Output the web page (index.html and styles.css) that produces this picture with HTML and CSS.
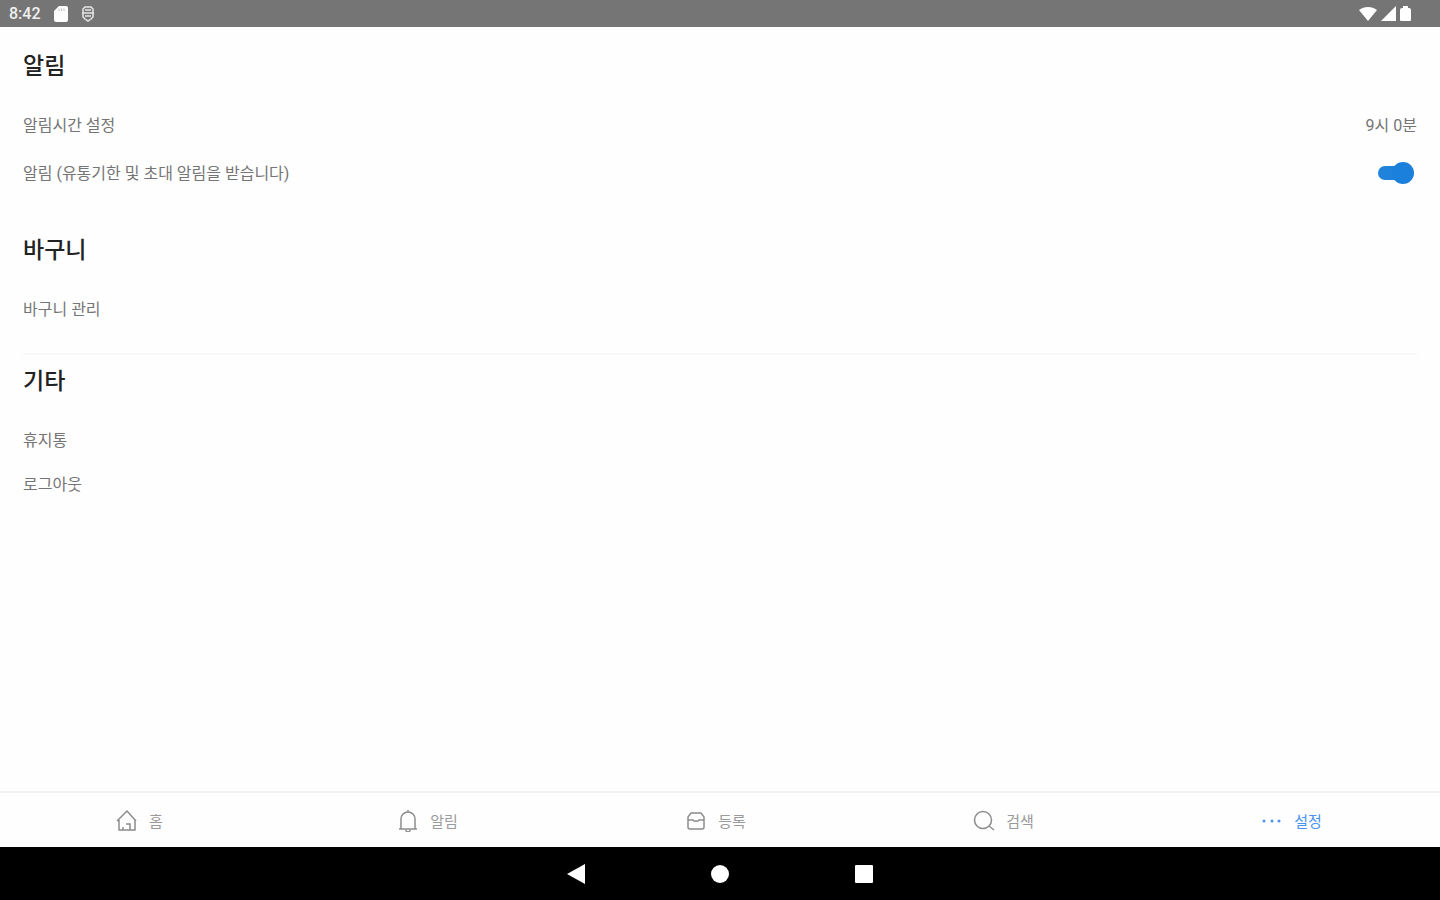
FILE: index.html
```html
<!DOCTYPE html>
<html lang="ko">

<head>
    <meta charset="UTF-8" />
    <meta name="viewport" content="width=device-width, initial-scale=1.0" />
    <title>설정</title>
    <link rel="stylesheet" href="styles.css">
</head>

<body>
    <header class="status-bar">
        <div class="status-left">
            <span class="clock">8:42</span>
            <svg width="14" height="18" viewBox="0 0 14 18" fill="#fff">
                <path d="M5 1h7a2 2 0 0 1 2 2v12a2 2 0 0 1-2 2H2a2 2 0 0 1-2-2V6z" />
                <path d="M5 3.5v2.500M7.500 3.500v2.500M10 3.500v2.500" stroke="#bbb" />
            </svg>
            <svg width="14" height="18" viewBox="0 0 14 18" fill="none" stroke="#e6e6e6" stroke-width="1.5">
                <path d="M4 2h6l2 2v8l-2 2-3 2-3-2-2-2V4z" />
                <path d="M1 8h12M4 11h6M4 5h6" />
            </svg>
        </div>
        <div class="status-right">
            <svg width="18" height="16" viewBox="0 0 18 16" fill="#fff">
                <path d="M0 4C5 0 13 0 18 4L9 15z" />
            </svg>
            <svg width="15" height="16" viewBox="0 0 15 16" fill="#fff">
                <path d="M15 0v15H0z" />
            </svg>
            <svg width="11" height="16" viewBox="0 0 11 16" fill="#fff">
                <path d="M3 0h5v2h1a2 2 0 0 1 2 2v10a1 1 0 0 1-1 1H1a1 1 0 0 1-1-1V4a2 2 0 0 1 2-2h1z" />
            </svg>
        </div>
    </header>

    <main class="content">
        <section class="section">
            <h2 class="heading">알림</h2>
            <div class="row">
                <span>알림시간 설정</span>
                <span>9시 0분</span>
            </div>
            <div class="row row-switch">
                <label for="push">알림 (유통기한 및 초대 알림을 받습니다)</label>
                <input type="checkbox" id="push" class="switch" checked />
            </div>
        </section>
        <section class="section">
            <h2 class="heading">바구니</h2>
            <a class="row" href="#">바구니 관리</a>
        </section>
        <section class="section section-etc">
            <h2 class="heading">기타</h2>
            <a class="row" href="#">휴지통</a>
            <a class="row" href="#">로그아웃</a>
        </section>
    </main>

    <nav class="tabs">
        <a class="tab" href="#">
            <svg class="tab-icon" viewBox="0 0 24 24">
                <path d="M2 13l10-10 9 10M4 12v10h16V12M8 22v-3M11 16h4v6" />
            </svg>
            홈
        </a>
        <a class="tab" href="#">
            <svg class="tab-icon" viewBox="0 0 24 24">
                <path d="M3 21h18M5 21V11a7 7 0 0 1 14 0v10M12 2v2M10 22a2 2 0 0 0 4 0" />
            </svg>
            알림
        </a>
        <a class="tab" href="#">
            <svg class="tab-icon" viewBox="0 0 24 24">
                <path d="M7 5h10l3 4v10a2 2 0 0 1-2 2H6a2 2 0 0 1-2-2V9zM4 12h5l1 1h4l1-1h5" />
            </svg>
            등록
        </a>
        <a class="tab" href="#">
            <svg class="tab-icon" viewBox="0 0 24 24">
                <circle cx="11" cy="12" r="8.5" />
                <path d="M17 18l5 4" />
            </svg>
            검색
        </a>
        <a class="tab active" href="#">
            <svg class="tab-icon dots" viewBox="0 0 24 24">
                <circle cx="4" cy="13" r="1.5" />
                <circle cx="12" cy="13" r="1.5" />
                <circle cx="19" cy="13" r="1.5" />
            </svg>
            설정
        </a>
    </nav>

    <footer class="system-bar">
        <button type="button" aria-label="뒤로">
            <svg width="20" height="20" viewBox="0 0 20 20" fill="#fff">
                <path d="M1 10L19 0v20z" />
            </svg>
        </button>
        <button type="button" aria-label="홈 화면">
            <svg width="20" height="20" viewBox="0 0 20 20" fill="#fff">
                <circle cx="10" cy="10" r="9" />
            </svg>
        </button>
        <button type="button" aria-label="최근 앱">
            <svg width="20" height="20" viewBox="0 0 20 20" fill="#fff">
                <rect x="1" y="1" width="18" height="18" rx="1" />
            </svg>
        </button>
    </footer>
</body>

</html>
```
FILE: styles.css
```css
* {
    box-sizing: border-box;
    margin: 0;
    padding: 0;
}

body {
    font-family: Roboto, 'Noto Sans CJK KR', sans-serif;
    font-size: 16px;
    background: #fefefe;
    color: #757575;
    display: flex;
    flex-direction: column;
    min-height: 100vh;
}

a {
    color: inherit;
    text-decoration: none;
}

svg {
    display: block;
}

/* status bar */
.status-bar {
    display: flex;
    justify-content: space-between;
    align-items: center;
    height: 27px;
    padding: 0 29px 0 9px;
    background: #757575;
}

.status-left {
    display: flex;
    align-items: center;
    gap: 13px;
}

.status-right {
    display: flex;
    align-items: center;
    gap: 4px;
}

.clock {
    font-size: 16px;
    line-height: 20px;
    font-weight: 500;
    color: #f0f0f0;
}

/* settings list */
.content {
    flex: 1;
    padding: 0 23px;
}

.heading {
    padding: 24px 0 19px;
    font-size: 23px;
    line-height: 32px;
    font-weight: 500;
    color: #222;
}

.row {
    display: flex;
    justify-content: space-between;
    align-items: center;
    height: 44px;
}

.row-switch {
    height: 52px;
    margin-bottom: 13px;
}

.section-etc {
    margin-top: 23px;
    border-top: 2px solid #f8f8f8;
}

.section-etc .heading {
    padding-top: 11px;
}

.switch {
    appearance: none;
    position: relative;
    width: 36px;
    height: 24px;
    margin-right: 3px;
    cursor: pointer;
}

.switch::before {
    content: '';
    position: absolute;
    top: 6px;
    left: 0;
    width: 32px;
    height: 14px;
    border-radius: 7px;
    background: #bbb;
}

.switch::after {
    content: '';
    position: absolute;
    top: 2px;
    left: 0;
    width: 22px;
    height: 22px;
    border-radius: 50%;
    background: #eee;
}

.switch:checked::before {
    background: #1f83dc;
}

.switch:checked::after {
    left: 14px;
    background: #1a80dc;
}

/* bottom tabs */
.tabs {
    display: flex;
    height: 56px;
    border-top: 2px solid #f3f3f3;
}

.tab {
    flex: 1;
    display: flex;
    justify-content: center;
    align-items: center;
    gap: 10px;
    padding-right: 10px;
    font-size: 15px;
    color: #9a9a9a;
}

.tab-icon {
    width: 24px;
    height: 24px;
    fill: none;
    stroke: #8c8c8c;
    stroke-width: 1.5;
}

.tab.active {
    color: #4a94ee;
}

.dots {
    fill: #4a94ee;
    stroke: none;
}

/* android navigation */
.system-bar {
    display: flex;
    justify-content: center;
    align-items: center;
    gap: 104px;
    height: 53px;
    background: #000;
}

.system-bar button {
    display: flex;
    justify-content: center;
    width: 40px;
    border: none;
    background: none;
    cursor: pointer;
}
```
